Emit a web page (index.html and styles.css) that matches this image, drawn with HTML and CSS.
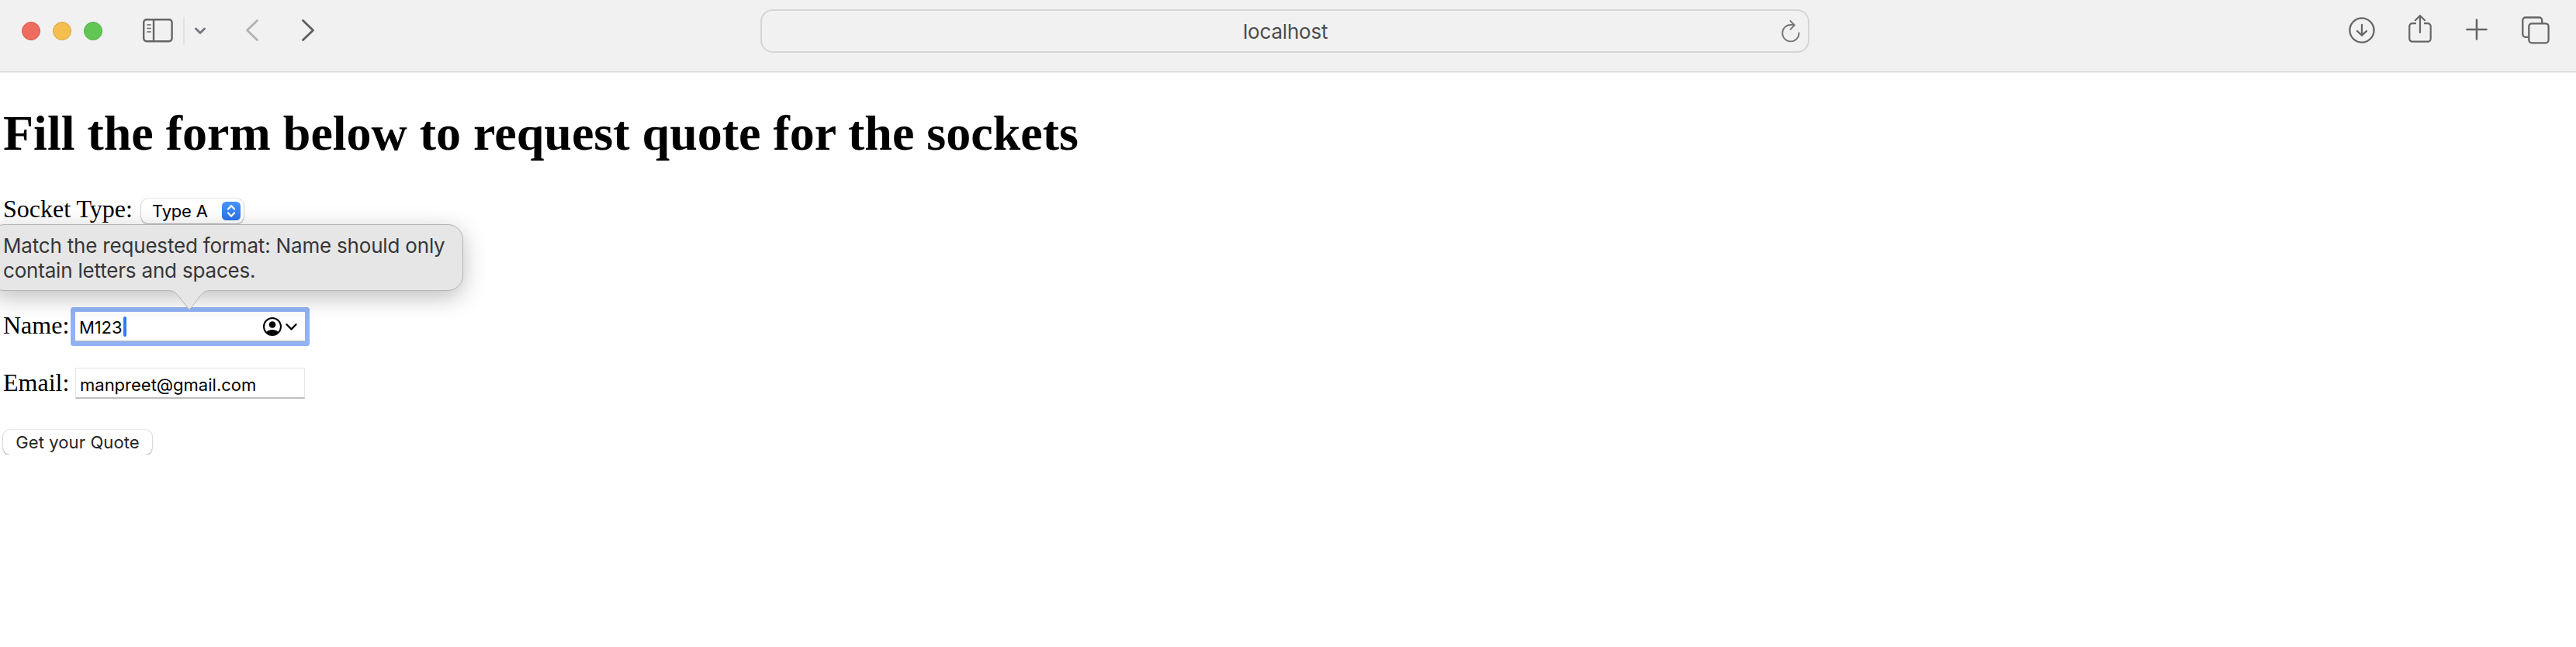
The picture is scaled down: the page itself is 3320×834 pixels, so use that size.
FILE: index.html
```html
<!DOCTYPE html>
<html lang="en">
<head>
<meta charset="utf-8">
<title>localhost</title>
<link rel="stylesheet" href="styles.css">
</head>
<body>
<header class="toolbar">
  <div class="nav">
    <div class="lights"><i class="light red"></i><i class="light yellow"></i><i class="light green"></i></div>
    <svg class="sidebar" width="40" height="32" viewBox="0 0 40 32" fill="none" stroke="#666" stroke-width="2.4"><rect x="2.2" y="2.2" width="36.4" height="28" rx="3.6"/><path d="M15 2v28"/><path d="M7 9h4M7 13.5h4M7 18h4" stroke-width="1.7" stroke-linecap="round"/></svg>
    <i class="divider"></i>
    <svg class="menu-arrow" width="16" height="12" viewBox="0 0 16 12" fill="none" stroke="#7c7a82" stroke-width="3" stroke-linecap="round" stroke-linejoin="round"><path d="M2.5 3l5.5 5.5L13.500 3"/></svg>
    <svg class="back" width="18" height="30" viewBox="0 0 18 30" fill="none" stroke="#b2b2b2" stroke-width="2.8" stroke-linecap="round" stroke-linejoin="round"><path d="M15.500 2.500L2.500 15l13 12.500"/></svg>
    <svg class="forward" width="18" height="30" viewBox="0 0 18 30" fill="none" stroke="#5e5e5e" stroke-width="2.8" stroke-linecap="round" stroke-linejoin="round"><path d="M2.500 2.500L15.500 15l-13 12.500"/></svg>
  </div>
  <div class="address">
    <span class="url">localhost</span>
    <svg class="reload" width="26" height="30" viewBox="0 0 26 30" fill="none" stroke="#777" stroke-width="1.9" stroke-linecap="round" stroke-linejoin="round"><path d="M23.600 17.500A10.700 10.700 0 1 1 12.900 7H17.500"/><path d="M12.500 2l5.300 5.500-5.300 5.300"/></svg>
  </div>
  <div class="actions">
    <svg width="34" height="34" viewBox="0 0 34 34" fill="none" stroke="#666" stroke-width="2.3" stroke-linecap="round" stroke-linejoin="round"><circle cx="17" cy="17" r="15.600"/><path d="M17 10v13.500M11 18l6 5.700 6-5.700"/></svg>
    <svg class="share" width="30" height="38" viewBox="0 0 30 38" fill="none" stroke="#666" stroke-width="2.2" stroke-linecap="round" stroke-linejoin="round"><path d="M10 12.200H5A3.700 3.700 0 0 0 1.300 15.900V32A3.700 3.700 0 0 0 5 35.700H25A3.700 3.700 0 0 0 28.700 32V15.900A3.700 3.700 0 0 0 25 12.200H20" stroke-linecap="butt"/><path d="M15 24V2.200M8.800 8.200L15 2.200l6.200 6"/></svg>
    <svg class="plus" width="28" height="28" viewBox="0 0 28 28" fill="none" stroke="#666" stroke-width="2.6" stroke-linecap="round"><path d="M14 1.500v25M1.500 14h25"/></svg>
    <svg class="tabs" width="36" height="36" viewBox="0 0 36 36" fill="none" stroke="#666" stroke-width="2.3"><path d="M9 26.800H5A3.700 3.700 0 0 1 1.300 23.100V5.200A3.700 3.700 0 0 1 5 1.500H22.500A3.700 3.700 0 0 1 26.200 5.200V9"/><rect x="9.300" y="9.300" width="25.300" height="25" rx="3.700"/></svg>
  </div>
</header>
<main>
  <h1>Fill the form below to request quote for the sockets</h1>
  <form>
    <div class="row type-row">
      <label class="type-label">Socket Type:</label>
      <div class="select"><span class="choice">Type A</span>
        <svg width="24" height="24" viewBox="0 0 24 24"><defs><linearGradient id="blue" x2="0" y2="1"><stop stop-color="#4794f8"/><stop offset="1" stop-color="#2b74ec"/></linearGradient></defs><rect width="24" height="24" rx="5.500" fill="url(#blue)"/><path d="M8 9.500l4-4.200 4 4.200M8 14.500l4 4.200 4-4.200" fill="none" stroke="#fff" stroke-width="2.300" stroke-linecap="round" stroke-linejoin="round"/></svg>
      </div>
    </div>
    <div class="row name-row">
      <label class="field-label">Name:</label>
      <div class="field focused"><span class="value">M123</span><i class="caret"></i>
        <svg class="contact" width="46" height="26" viewBox="0 0 46 26"><defs><clipPath id="face"><circle cx="13" cy="13" r="11"/></clipPath></defs><circle cx="13" cy="13" r="11" fill="none" stroke="#000" stroke-width="2"/><circle cx="13" cy="10.500" r="4.300"/><ellipse cx="13" cy="22.500" rx="8.500" ry="5.500" clip-path="url(#face)"/><path d="M31.500 10.200l6 6.200 6-6.200" fill="none" stroke="#000" stroke-width="2.300" stroke-linecap="round" stroke-linejoin="round"/></svg>
      </div>
      <div class="tooltip" role="alert">
        <p class="tip-line">Match the requested format: Name should only</p>
        <p class="tip-line">contain letters and spaces.</p>
        <svg class="tip" width="56" height="28" viewBox="0 0 56 28"><path d="M0 0V1.500C7 1.500 10 4 13.500 8L25.500 23.500Q28 27.300 30.500 23.500L42.500 8C46 4 49 1.500 56 1.500V0Z" fill="#e6e6e6"/><path d="M0 1.500C7 1.500 10 4 13.500 8L25.500 23.500Q28 27.300 30.500 23.500L42.500 8C46 4 49 1.500 56 1.500" fill="none" stroke="#b4b4b4"/></svg>
      </div>
    </div>
    <div class="row email-row">
      <label class="field-label">Email:</label>
      <div class="field"><span class="value mail">manpreet@gmail.com</span></div>
    </div>
    <button class="submit" type="button">Get your Quote</button>
  </form>
</main>
</body>
</html>
```

FILE: styles.css
```css
* { box-sizing: border-box; }
body { margin: 0; background: #fff; color: #000; font-family: "Liberation Serif", serif; overflow: hidden; }
svg { display: block; flex: none; }
.toolbar { height: 94px; display: grid; grid-template-columns: 980px 1352px 1fr; background: #f1f1f1; border-bottom: 1px solid #ededed; box-shadow: inset 0 -1px #d5d5d5; }
.nav { display: flex; align-items: flex-start; padding-left: 28px; }
.lights { display: flex; gap: 16px; margin-top: 28px; }
.light { width: 24px; height: 24px; border-radius: 50%; }
.red { background: #ed6b5f; border: 1px solid #d9584d; }
.yellow { background: #f5bf50; border: 1px solid #dca43c; }
.green { background: #62c655; border: 1px solid #50ae42; }
.sidebar { margin: 23px 0 0 51px; }
.divider { width: 2px; height: 36px; background: #e2e2e2; margin: 22px 0 0 13px; }
.menu-arrow { margin: 34px 0 0 12px; }
.back { margin: 24px 0 0 50px; }
.forward { margin: 24px 0 0 54px; }
.address { height: 56px; margin-top: 12px; border: 2px solid #d5d5d5; border-radius: 16px; display: flex; align-items: flex-start; }
.url { width: 110px; margin: 11px 583px 0 620px; font: 26px/32px Inter, sans-serif; color: #4c4c4c; letter-spacing: -.2px; white-space: nowrap; }
.reload { margin-top: 11px; }
.actions { display: flex; align-items: flex-start; padding: 22px 0 0 695px; }
.share { margin: -4px 0 0 43px; }
.plus { margin: 2px 0 0 44px; }
.tabs { margin: -1px 0 0 44px; }
main { padding: 0 4px; }
h1 { margin: 42px 0 0; font-size: 64px; line-height: 72px; white-space: nowrap; }
.row { display: flex; align-items: flex-start; font-size: 32px; line-height: 36px; }
.type-row { margin-top: 43px; }
.type-label { width: 178px; white-space: nowrap; }
.select { width: 132px; height: 32px; margin-top: 5px; padding: 4px 4px 0 14px; display: flex; justify-content: space-between; border-radius: 9px; background: #fff; box-shadow: 0 0 2px rgba(0,0,0,.28), 0 1px 2px rgba(0,0,0,.3); }
.choice { font: 22px/24px Inter, sans-serif; letter-spacing: -.2px; }
.name-row { position: relative; margin-top: 113px; }
.field-label { width: 93px; }
.field { width: 296px; height: 40px; padding-left: 5px; display: flex; align-items: flex-start; font: 22px/42px Inter, sans-serif; background: #fff; border: 1px solid #e6e6e6; border-bottom: 2px solid #bfbfbf; }
.focused { height: 38px; margin-top: 1px; border: 0; border-bottom: 1px solid #b6b6b6; box-shadow: 0 0 0 6px #91b2f4; border-radius: 1px; line-height: 40px; }
.value { width: 57px; letter-spacing: -.1px; white-space: nowrap; }
.caret { width: 4px; height: 26px; margin-top: 6px; border-radius: 2px; background: #2f7bf6; }
.contact { margin: 6px 0 0 175px; }
.tooltip { position: absolute; left: -18px; top: -112px; width: 611px; height: 86px; padding: 11px 0 0 17px; background: #e6e6e6; border: 1px solid #b4b4b4; border-radius: 20px; box-shadow: 0 8px 30px rgba(0,0,0,.26); color: #363636; font: 26px/32px Inter, sans-serif; letter-spacing: -.19px; }
.tip-line { margin: 0; white-space: nowrap; }
.tip { position: absolute; left: 229px; top: 83px; }
.email-row { margin-top: 34px; line-height: 38px; }
.mail { letter-spacing: 0; }
.submit { display: block; width: 192px; height: 32px; margin: 40px 0 0; padding: 0; border: 0; border-radius: 9px; background: #fff; box-shadow: 0 0 2px rgba(0,0,0,.28), 0 1px 2px rgba(0,0,0,.3); color: #262626; font: 22px/32px Inter, sans-serif; letter-spacing: .1px; white-space: nowrap; }
```
